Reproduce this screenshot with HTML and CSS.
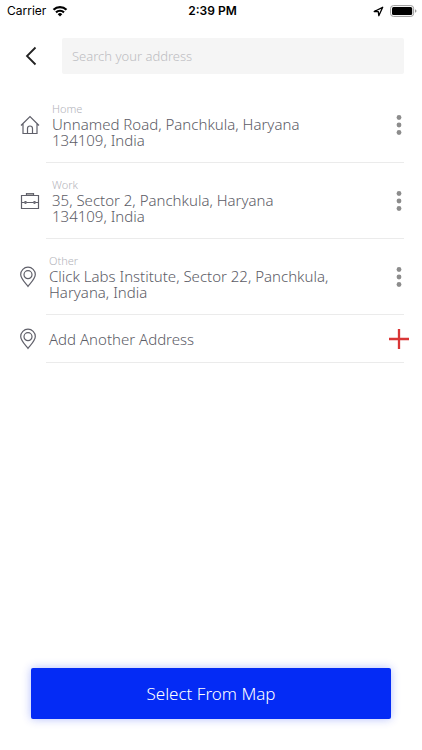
FILE: index.html
```html
<!DOCTYPE html>
<html lang="en">
<head>
<meta charset="utf-8">
<meta name="viewport" content="width=device-width, initial-scale=1">
<title>Select address</title>
<link rel="stylesheet" href="styles.css">
</head>
<body>
<svg class="defs" aria-hidden="true">
  <symbol id="pin" viewBox="1 0 16 22"><path d="M9 20.500C6.500 17.200 1.700 12.500 1.700 8.500a7.300 7.300 0 0 1 14.600 0c0 4-4.800 8.700-7.300 12z"/><circle cx="9" cy="8.700" r="4"/></symbol>
  <symbol id="dots" viewBox="0 0 6 22"><circle cx="3" cy="3.500" r="2.400"/><circle cx="3" cy="11" r="2.400"/><circle cx="3" cy="18.500" r="2.400"/></symbol>
</svg>
<div class="screen">
  <div class="status">
    <div class="carrier"><span>Carrier</span>
      <svg width="16" height="12" viewBox="0 0 16 12"><g fill="none" stroke="#000" stroke-width="2.200"><path d="M1.500 4.700a9.300 9.300 0 0 1 13 0"/><path d="M4 7.400a5.700 5.700 0 0 1 8 0"/></g><path d="M8 11.500 5.700 9.200a3.300 3.300 0 0 1 4.600 0z"/></svg>
    </div>
    <time class="time">2:39 PM</time>
    <div class="indicators">
      <svg width="11" height="11" viewBox="0 0 11 11"><path d="M1.200 5.500 9.700 1.300 5.800 9.700 5.300 5.700z" fill="none" stroke="#000" stroke-width="1.300" stroke-linejoin="round"/></svg>
      <svg width="28" height="12" viewBox="0 0 28 12"><rect x=".6" y=".6" width="23" height="10.800" rx="2.800" fill="none" stroke="#999"/><rect x="2" y="2" width="20.200" height="8" rx="1.500"/><path d="M25 4.200q1.500.5 1.500 1.800T25 7.800z" fill="#999"/></svg>
    </div>
  </div>
  <header class="header">
    <button class="back" type="button" aria-label="Back"><svg width="12" height="20" viewBox="0 0 12 20"><path d="M10.500 1.500 2 10l8.500 8.500" fill="none" stroke="#222" stroke-width="1.800"/></svg></button>
    <input class="search" type="text" placeholder="Search your address" aria-label="Search your address">
  </header>
  <main class="main">
    <ul class="list">
      <li class="row">
        <svg class="icon" width="20" height="20" viewBox="0 0 20 20"><path d="M1 10.500 10 1.500l9 9M3 9v9.500h14V9M7.500 18.500v-5a2.500 2.500 0 0 1 5 0v5"/></svg>
        <div class="text inset"><span class="label">Home</span><span class="address">Unnamed Road, Panchkula, Haryana 134109, India</span></div>
        <button class="action" type="button" aria-label="Home options"><svg class="dots" width="6" height="22"><use href="#dots"/></svg></button>
      </li>
      <li class="row">
        <svg class="icon" width="20" height="20" viewBox="0 0 20 20"><path d="M1.500 4.500h17v13h-17zM6.500 4.500v-2h7v2M1.500 11.500h3m2 0h7m2 0h3"/><path d="M7 3.300h6" stroke="#999"/><circle cx="5.500" cy="11.500" r=".8"/><circle cx="14.500" cy="11.500" r=".8"/></svg>
        <div class="text inset"><span class="label">Work</span><span class="address">35, Sector 2, Panchkula, Haryana 134109, India</span></div>
        <button class="action" type="button" aria-label="Work options"><svg class="dots" width="6" height="22"><use href="#dots"/></svg></button>
      </li>
      <li class="row">
        <svg class="icon" width="16" height="22"><use href="#pin"/></svg>
        <div class="text"><span class="label">Other</span><span class="address">Click Labs Institute, Sector 22, Panchkula, Haryana, India</span></div>
        <button class="action" type="button" aria-label="Other options"><svg class="dots" width="6" height="22"><use href="#dots"/></svg></button>
      </li>
      <li class="row add">
        <svg class="icon" width="16" height="22"><use href="#pin"/></svg>
        <div class="text"><span class="address">Add Another Address</span></div>
        <button class="action" type="button" aria-label="Add another address"><svg width="22" height="22" viewBox="0 0 22 22"><path d="M11 1v20M1 11h20" stroke="#d93636" stroke-width="2.300"/></svg></button>
      </li>
    </ul>
  </main>
  <footer class="footer"><button class="select" type="button">Select From Map</button></footer>
</div>
</body>
</html>
```

FILE: styles.css
```css
* {
  box-sizing: border-box;
}

body {
  margin: 0;
  background: #fff;
  color: #5c5c66;
  font-family: "Noto Sans", sans-serif;
  font-weight: 300;
}

button,
input {
  margin: 0;
  padding: 0;
  border: 0;
  background: none;
  font: inherit;
}

svg {
  display: block;
}

.defs {
  position: absolute;
  width: 0;
  height: 0;
}

.screen {
  display: flex;
  flex-direction: column;
  min-height: 100vh;
}

.status {
  display: grid;
  grid-template-columns: 1fr auto 1fr;
  align-items: center;
  height: 22px;
  padding: 0 4px 0 7px;
  color: #000;
  font: 400 12px/22px Inter, sans-serif;
}

.carrier,
.indicators {
  display: flex;
  align-items: center;
  gap: 6px;
}

.indicators {
  justify-content: flex-end;
}

.time {
  font-weight: 600;
}

.header {
  display: flex;
  padding: 16px 18px 0 0;
}

.back {
  display: flex;
  flex: 0 0 62px;
  align-items: center;
  justify-content: center;
}

.search {
  flex: 1;
  min-width: 0;
  height: 36px;
  padding: 0 10px;
  border-radius: 2px;
  background: #f5f5f5;
  color: #5c5c66;
  font-size: 13px;
}

.search::placeholder {
  color: #bdbdc2;
  opacity: 1;
}

.main {
  flex: 1;
  padding-top: 13px;
}

.list {
  margin: 0;
  padding: 0;
  list-style: none;
}

.row {
  display: grid;
  grid-template-columns: 20px 1fr 46px;
  grid-template-rows: 1fr 1px;
  align-items: center;
  min-height: 76px;
  padding-left: 20px;
}

.row::after {
  content: "";
  grid-column: 1 / -1;
  height: 1px;
  margin: 0 18px 0 26px;
  background: #ebebeb;
}

.add {
  min-height: 48px;
}

.icon {
  fill: none;
  stroke: #60606a;
  stroke-width: 1.2;
}

.text {
  padding-left: 9px;
}

.inset {
  padding-right: 50px;
  padding-left: 12px;
}

.label,
.address {
  display: block;
}

.label {
  color: #b3b3ba;
  font-size: 11px;
  line-height: 14px;
}

.address {
  font-size: 15px;
  line-height: 16px;
}

.action {
  display: flex;
  align-items: center;
  justify-content: center;
  height: 44px;
}

.dots {
  fill: #8c8c8c;
}

.footer {
  padding: 0 31px 31px;
}

.select {
  width: 100%;
  height: 51px;
  border-radius: 2px;
  background: #042bf5;
  box-shadow: 0 0 10px rgba(4, 43, 245, 0.3);
  color: #fff;
  font-size: 17px;
}
```
